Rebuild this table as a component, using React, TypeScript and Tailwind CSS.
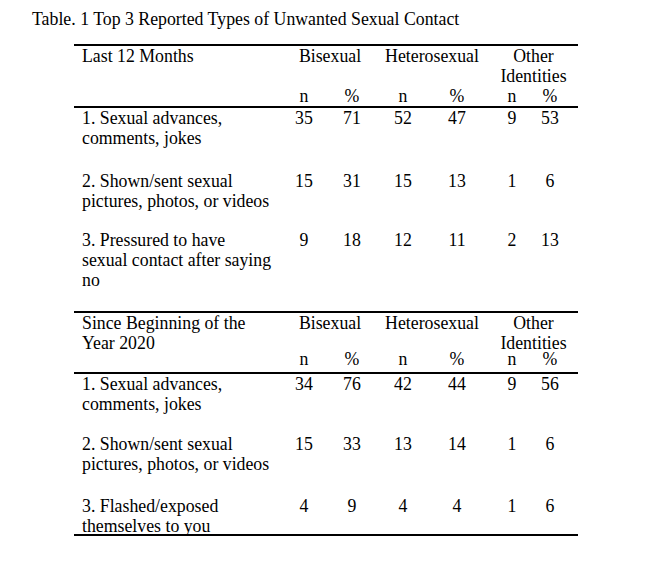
import React from "react";

type Row = { label: string; values: number[]; pb: string };

type Section = {
    title: string;
    nRowClass: string;
    rows: Row[];
};

const sections: Section[] = [
    {
        title: "Last 12 Months",
        nRowClass: "leading-[20px]",
        rows: [
            { label: "1. Sexual advances, comments, jokes", values: [35, 71, 52, 47, 9, 53], pb: "pb-[23px]" },
            { label: "2. Shown/sent sexual pictures, photos, or videos", values: [15, 31, 15, 13, 1, 6], pb: "pb-[19px]" },
            { label: "3. Pressured to have sexual contact after saying no", values: [9, 18, 12, 11, 2, 13], pb: "pb-[21px]" },
        ],
    },
    {
        title: "Since Beginning of the Year 2020",
        nRowClass: "leading-[12px] pb-[7px]",
        rows: [
            { label: "1. Sexual advances, comments, jokes", values: [34, 76, 42, 44, 9, 56], pb: "pb-[20px]" },
            { label: "2. Shown/sent sexual pictures, photos, or videos", values: [15, 33, 13, 14, 1, 6], pb: "pb-[22px]" },
            { label: "3. Flashed/exposed themselves to you", values: [4, 9, 4, 4, 1, 6], pb: "pb-0" },
        ],
    },
];

const gridCols = "grid grid-cols-[211px_38px_58px_44px_64px_46px_30px_13px]";

function DataRow({ row }: { row: Row }) {
    return (
        <div className={`${gridCols} ${row.pb}`}>
            <div className="pl-[8px] pr-[13px]">{row.label}</div>
            {row.values.map((v, i) => (
                <div key={i} className="text-center">
                    {v}
                </div>
            ))}
        </div>
    );
}

function TableSection({ section }: { section: Section }) {
    return (
        <div className="border-t-2 border-black">
            <div className={gridCols}>
                <div className="pl-[8px] pr-[13px]">{section.title}</div>
                <div className="col-span-2 pr-[6px] text-center">Bisexual</div>
                <div className="col-span-2 pr-[6px] text-center">Heterosexual</div>
                <div className="col-span-3 text-center">
                    Other
                    <br />
                    Identities
                </div>
            </div>
            <div className={`${gridCols} ${section.nRowClass}`}>
                <div />
                <div className="text-center">n</div>
                <div className="text-center">%</div>
                <div className="text-center">n</div>
                <div className="text-center">%</div>
                <div className="text-center">n</div>
                <div className="text-center">%</div>
            </div>
            <div className="border-t-2 border-black">
                {section.rows.map((row, i) => (
                    <DataRow key={i} row={row} />
                ))}
            </div>
        </div>
    );
}

export default function App() {
    return (
        <div className="min-h-[564px] w-[672px] bg-white pt-[9px] text-[17.8px] leading-[20px] text-black [font-family:'Liberation_Serif','Times_New_Roman',serif]">
            <div className="pl-[32px]">Table. 1 Top 3 Reported Types of Unwanted Sexual Contact</div>
            <div className="ml-[74px] mt-[15px] w-[504px]">
                {sections.map((section, i) => (
                    <TableSection key={i} section={section} />
                ))}
                <div className="-mt-[2px] border-t-2 border-black" />
            </div>
        </div>
    );
}
